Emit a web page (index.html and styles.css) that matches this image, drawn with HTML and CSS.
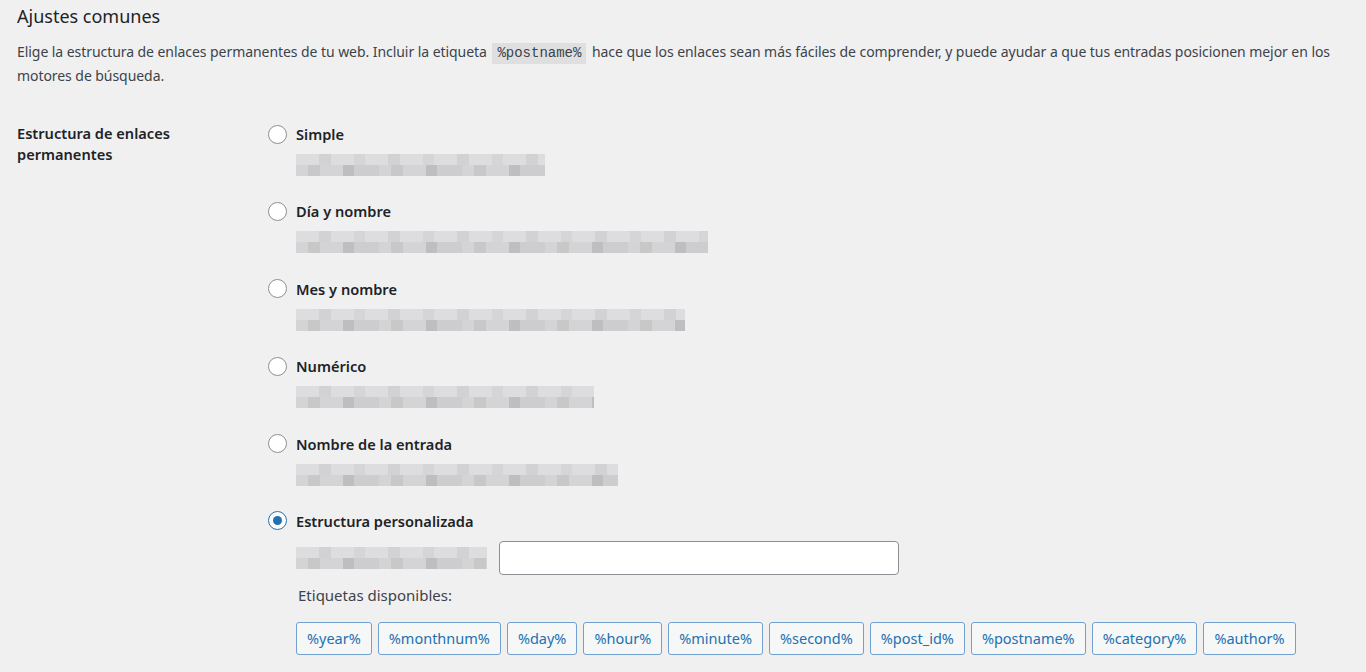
FILE: index.html
```html
<!DOCTYPE html>
<html lang="es">
<head>
<meta charset="utf-8">
<title>Ajustes comunes</title>
<link rel="stylesheet" href="styles.css">
</head>
<body>
<div class="wrap">
  <h2 class="title">Ajustes comunes</h2>
  <p class="desc">Elige la estructura de enlaces permanentes de tu web. Incluir la etiqueta <code>%postname%</code> hace que los enlaces sean más fáciles de comprender, y puede ayudar a que tus entradas posicionen mejor en los motores de búsqueda.</p>
  <div class="form-row">
    <div class="th">Estructura de enlaces permanentes</div>
    <div class="td">
      <div class="option">
        <label class="opt-label"><span class="radio"></span>Simple</label>
        <span class="blur w1"></span>
      </div>
      <div class="option">
        <label class="opt-label"><span class="radio"></span>Día y nombre</label>
        <span class="blur w2"></span>
      </div>
      <div class="option">
        <label class="opt-label"><span class="radio"></span>Mes y nombre</label>
        <span class="blur w3"></span>
      </div>
      <div class="option">
        <label class="opt-label"><span class="radio"></span>Numérico</label>
        <span class="blur w4"></span>
      </div>
      <div class="option">
        <label class="opt-label"><span class="radio"></span>Nombre de la entrada</label>
        <span class="blur w5"></span>
      </div>
      <div class="option last">
        <label class="opt-label"><span class="radio checked"></span>Estructura personalizada</label>
        <div class="custom-row">
          <span class="blur w6"></span>
          <span class="input"></span>
        </div>
        <div class="avail">Etiquetas disponibles:</div>
        <div class="tags">
          <span class="tag">%year%</span>
          <span class="tag">%monthnum%</span>
          <span class="tag">%day%</span>
          <span class="tag">%hour%</span>
          <span class="tag">%minute%</span>
          <span class="tag">%second%</span>
          <span class="tag">%post_id%</span>
          <span class="tag">%postname%</span>
          <span class="tag">%category%</span>
          <span class="tag">%author%</span>
        </div>
      </div>
    </div>
  </div>
</div>
</body>
</html>
```
FILE: styles.css
```css
html, body {
  margin: 0;
  padding: 0;
  background: #f0f0f1;
}
body {
  font-family: "Noto Sans", "Open Sans", sans-serif;
  color: #3c434a;
  font-size: 14px;
  overflow: hidden;
}
.wrap {
  padding: 0 17px;
}
.title {
  margin: 0;
  padding-top: 4px;
  font-size: 18px;
  line-height: 24px;
  font-weight: 400;
  color: #1d2327;
}
.desc {
  margin: 12px 0 0;
  line-height: 23px;
  font-size: 14px;
  letter-spacing: -0.06px;
}
.desc code {
  display: inline-block;
  font-family: "Liberation Mono", monospace;
  font-size: 14px;
  line-height: 21px;
  letter-spacing: 0;
  background: rgba(0,0,0,0.07);
  padding: 0 5px;
  margin: 0 2px;
}
.form-row {
  display: flex;
  margin-top: 36px;
}
.th {
  width: 230px;
  padding-right: 21px;
  font-weight: 600;
  font-size: 14.6px;
  color: #1d2327;
  line-height: 21px;
  flex-shrink: 0;
}
.td {
  display: flex;
  flex-direction: column;
}
.option {
  display: flex;
  flex-direction: column;
  align-items: flex-start;
  margin-bottom: 24.4px;
}
.opt-label {
  display: flex;
  align-items: center;
  height: 22px;
  font-weight: 600;
  font-size: 14.6px;
  color: #1d2327;
}
.radio {
  width: 17px;
  height: 17px;
  border: 1px solid #8c8f94;
  border-radius: 50%;
  background: #fff;
  margin-right: 9px;
  position: relative;
  box-sizing: content-box;
}
.radio.checked {
  border-color: #2271b1;
}
.radio.checked::after {
  content: "";
  position: absolute;
  left: 4px;
  top: 4px;
  width: 9px;
  height: 9px;
  border-radius: 50%;
  background: #2271b1;
}
.blur {
  display: block;
  height: 22px;
  margin-top: 9px;
  margin-left: 28px;
  background:
    repeating-linear-gradient(90deg, rgba(0,0,0,0) 0 23px, rgba(0,0,0,0.05) 23px 35px, rgba(0,0,0,0) 35px 58px, rgba(0,0,0,0.035) 58px 69px) top / 100% 50% no-repeat,
    repeating-linear-gradient(90deg, rgba(0,0,0,0) 0 12px, rgba(0,0,0,0.06) 12px 24px, rgba(0,0,0,0) 24px 47px, rgba(0,0,0,0.1) 47px 58px, rgba(0,0,0,0.03) 58px 83px) bottom / 100% 50% no-repeat,
    linear-gradient(180deg, #dddddf 0 50%, #d4d4d6 50% 100%);
}
.w1 { width: 249px; }
.w2 { width: 412px; }
.w3 { width: 389px; }
.w4 { width: 298px; }
.w5 { width: 322px; }
.custom-row {
  display: flex;
  align-items: center;
  margin-top: 9px;
  margin-left: 28px;
}
.custom-row .blur {
  margin: 0 12px 0 0;
}
.w6 { width: 191px; }
.input {
  display: block;
  width: 398px;
  height: 32px;
  border: 1px solid #8c8f94;
  border-radius: 4px;
  background: #fff;
}
.avail {
  margin: 9px 0 0 30px;
  line-height: 22px;
  font-size: 15px;
  font-weight: 400;
  color: #3c434a;
}
.tags {
  display: flex;
  gap: 6px;
  margin: 16px 0 0 28px;
}
.tag {
  display: flex;
  align-items: center;
  height: 31px;
  padding: 0 10px;
  border: 1px solid #72a0cf;
  border-radius: 3px;
  background: #f6f7f7;
  color: #2271b1;
  font-size: 14.5px;
}
```
